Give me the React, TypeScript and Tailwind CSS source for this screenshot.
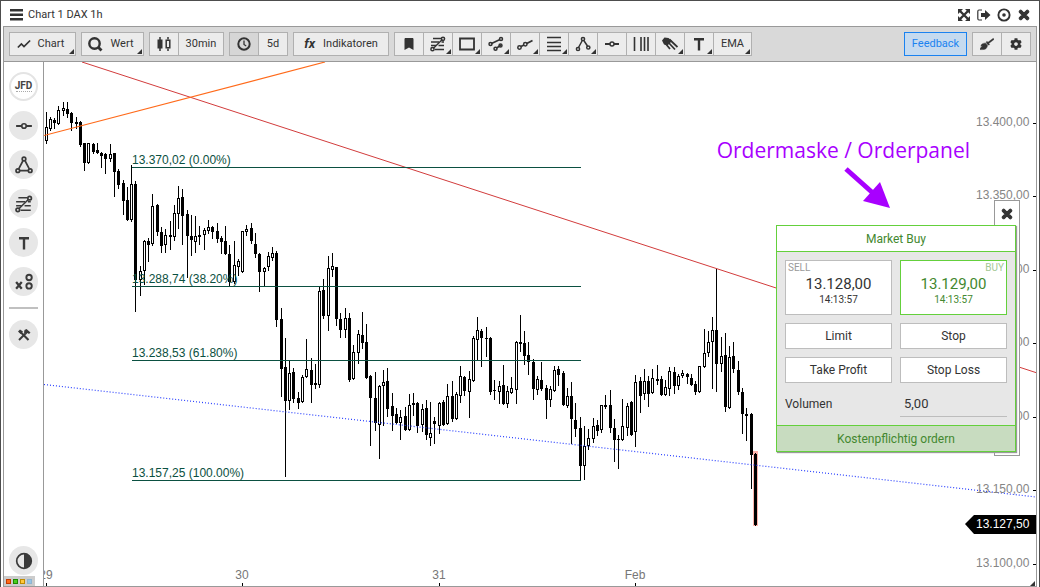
import type { ReactNode } from "react";
import { FaBookmark, FaBroom, FaCog, FaTimes } from "react-icons/fa";

// x, high, body top, body bottom, low, 1 = rising (hollow)
const CANDLES = [
  [46, 112, 127, 141, 143, 1], [50, 117, 119, 129, 130, 1], [54, 118, 120, 123, 128, 0],
  [58, 106, 110, 124, 124, 1], [63, 102, 108, 111, 115, 1], [67, 102, 109, 114, 117, 0],
  [71, 112, 113, 123, 130, 0], [76, 117, 122, 124, 128, 0], [80, 121, 122, 145, 146, 0],
  [84, 143, 143, 163, 170, 0], [88, 143, 143, 163, 163, 1], [93, 143, 144, 152, 153, 0],
  [97, 143, 150, 153, 153, 0], [101, 152, 153, 156, 167, 0], [105, 153, 154, 159, 173, 0],
  [110, 144, 154, 159, 161, 1], [114, 153, 153, 172, 196, 0], [118, 169, 171, 185, 188, 0],
  [123, 180, 183, 201, 214, 0], [127, 187, 200, 220, 220, 0], [131, 165, 184, 220, 221, 1],
  [135, 181, 184, 280, 311, 0], [140, 266, 271, 280, 295, 1], [144, 240, 241, 271, 284, 1],
  [148, 238, 241, 245, 261, 0], [152, 194, 206, 244, 245, 1], [157, 204, 205, 232, 235, 0],
  [161, 227, 232, 246, 252, 0], [165, 229, 235, 245, 252, 1], [170, 221, 235, 237, 249, 0],
  [174, 205, 213, 237, 240, 1], [178, 186, 198, 214, 228, 1], [182, 189, 197, 216, 244, 0],
  [187, 210, 214, 236, 277, 0], [191, 215, 236, 240, 255, 0], [195, 216, 236, 242, 252, 1],
  [199, 226, 235, 237, 244, 0], [204, 228, 230, 235, 249, 1], [208, 220, 227, 231, 233, 1],
  [212, 226, 227, 232, 238, 0], [217, 223, 231, 239, 242, 0], [221, 236, 238, 242, 253, 0],
  [225, 226, 241, 254, 254, 0], [229, 245, 254, 282, 285, 0], [234, 241, 265, 282, 283, 1],
  [238, 259, 261, 267, 275, 1], [242, 231, 231, 272, 272, 1], [246, 225, 229, 232, 235, 1],
  [251, 223, 228, 241, 243, 0], [255, 233, 244, 254, 257, 0], [259, 253, 254, 272, 291, 0],
  [264, 267, 268, 272, 286, 1], [268, 252, 256, 267, 270, 1], [272, 247, 253, 258, 260, 1],
  [276, 251, 253, 320, 326, 0], [281, 308, 319, 369, 396, 0], [285, 338, 367, 401, 476, 0],
  [289, 361, 373, 401, 409, 1], [293, 368, 372, 399, 402, 0], [298, 392, 398, 403, 408, 0],
  [302, 375, 377, 402, 402, 1], [306, 339, 369, 377, 377, 1], [311, 358, 370, 385, 402, 0],
  [315, 364, 383, 385, 388, 0], [319, 287, 291, 385, 387, 1], [323, 279, 290, 316, 318, 0],
  [328, 256, 268, 316, 330, 1], [332, 253, 266, 270, 276, 1], [336, 267, 267, 319, 325, 0],
  [340, 313, 319, 330, 337, 0], [345, 308, 318, 330, 337, 1], [349, 313, 318, 380, 381, 0],
  [353, 345, 352, 379, 379, 1], [358, 330, 334, 353, 363, 1], [362, 312, 335, 343, 348, 0],
  [366, 324, 342, 378, 378, 0], [370, 375, 376, 398, 445, 0], [375, 372, 398, 423, 430, 0],
  [379, 385, 386, 425, 458, 1], [383, 370, 382, 386, 425, 1], [387, 368, 381, 409, 416, 0],
  [392, 393, 406, 416, 430, 0], [396, 408, 414, 423, 423, 0], [400, 410, 417, 423, 439, 1],
  [405, 407, 416, 430, 430, 0], [409, 394, 405, 430, 430, 1], [413, 393, 403, 405, 415, 0],
  [417, 402, 403, 426, 432, 0], [422, 404, 409, 425, 431, 1], [426, 400, 408, 435, 439, 0],
  [430, 402, 433, 438, 445, 1], [434, 417, 421, 424, 443, 0], [439, 402, 403, 426, 433, 1],
  [443, 400, 402, 425, 425, 0], [447, 384, 396, 424, 424, 1], [452, 381, 396, 419, 421, 0],
  [456, 392, 394, 419, 419, 1], [460, 366, 376, 396, 402, 1], [464, 376, 377, 391, 395, 0],
  [469, 371, 379, 392, 417, 1], [473, 336, 338, 381, 381, 1], [477, 317, 330, 340, 360, 1],
  [481, 329, 331, 338, 366, 0], [486, 327, 338, 339, 356, 0], [490, 337, 338, 392, 394, 0],
  [494, 380, 390, 391, 399, 0], [499, 381, 386, 392, 403, 1], [503, 365, 385, 404, 404, 0],
  [507, 386, 391, 404, 407, 1], [511, 377, 388, 393, 393, 1], [516, 341, 342, 390, 403, 1],
  [520, 315, 342, 344, 351, 0], [524, 331, 343, 356, 364, 0], [528, 342, 355, 362, 374, 0],
  [533, 359, 362, 389, 399, 0], [537, 376, 379, 390, 394, 1], [541, 362, 380, 389, 390, 0],
  [546, 385, 388, 400, 418, 0], [550, 386, 389, 400, 406, 1], [554, 366, 370, 391, 391, 1],
  [558, 366, 369, 375, 385, 0], [563, 371, 373, 405, 405, 0], [567, 388, 396, 406, 407, 1],
  [571, 382, 396, 419, 443, 0], [575, 403, 420, 429, 436, 0], [580, 417, 428, 466, 480, 0],
  [584, 426, 446, 466, 479, 1], [588, 429, 438, 446, 449, 1], [593, 418, 426, 439, 442, 1],
  [597, 420, 425, 431, 435, 0], [601, 405, 405, 430, 432, 1], [605, 395, 405, 407, 408, 0],
  [610, 390, 405, 428, 432, 0], [614, 419, 428, 440, 461, 0], [618, 435, 439, 440, 468, 0],
  [622, 399, 426, 440, 440, 1], [627, 403, 406, 428, 435, 1], [631, 401, 402, 435, 435, 0],
  [635, 375, 382, 432, 446, 1], [640, 377, 381, 396, 412, 0], [644, 369, 381, 394, 399, 1],
  [648, 376, 381, 394, 406, 0], [652, 369, 378, 393, 393, 1], [657, 365, 379, 381, 384, 0],
  [661, 376, 379, 395, 395, 0], [665, 380, 387, 395, 395, 1], [669, 367, 371, 389, 395, 1],
  [674, 367, 372, 386, 393, 0], [678, 374, 376, 386, 389, 1], [682, 370, 373, 376, 377, 1],
  [687, 373, 374, 377, 383, 0], [691, 374, 378, 385, 385, 0], [695, 381, 384, 392, 394, 0],
  [699, 366, 366, 392, 392, 1], [704, 329, 353, 367, 367, 1], [708, 331, 342, 353, 356, 1],
  [712, 317, 330, 342, 388, 1], [716, 269, 330, 364, 391, 0], [721, 337, 356, 364, 371, 1],
  [725, 333, 355, 407, 411, 0], [729, 346, 357, 408, 408, 1], [733, 342, 356, 369, 372, 0],
  [738, 361, 370, 392, 394, 0], [742, 388, 392, 414, 433, 0], [746, 408, 414, 416, 440, 0],
  [751, 413, 414, 455, 488, 0], [755, 453, 454, 525, 525, 0],
];

const FIBS: [number, string][] = [
  [167, "13.370,02 (0.00%)"],
  [286, "13.288,74 (38.20%)"],
  [360, "13.238,53 (61.80%)"],
  [480, "13.157,25 (100.00%)"],
];

const PRICES: [number, string][] = [
  [123, "13.400,00"],
  [196, "13.350,00"],
  [270, "13.300,00"],
  [343, "13.250,00"],
  [417, "13.200,00"],
  [490, "13.150,00"],
  [564, "13.100,00"],
];

const TIMES: [number, string][] = [
  [46, "29"],
  [242, "30"],
  [439, "31"],
  [635, "Feb"],
];

function Icon({ size = 16, children }: { size?: number; children: ReactNode }) {
  return (
    <svg
      width={size}
      height={size}
      viewBox="0 0 16 16"
      fill="none"
      stroke="currentColor"
      strokeWidth="1.5"
      className="shrink-0"
      aria-hidden="true"
    >
      {children}
    </svg>
  );
}

const fibIcon = (
  <>
    <path d="M3 2.500h8M1 6h8M11.500 6H14M1 9.500h5M8.500 9.500H14M5 13.500h9" strokeWidth="1.400" />
    <path d="M3.200 12.400L12.300 3.600" strokeWidth="1.400" />
    <circle cx="13" cy="2.800" r="1.600" />
    <circle cx="2.500" cy="13.200" r="1.600" />
  </>
);

const hlineIcon = (
  <>
    <path d="M1 8h5M10 8h5" strokeWidth="1.800" />
    <circle cx="8" cy="8" r="2" strokeWidth="1.500" />
  </>
);

const textIcon = <path d="M3 3.200h10M8 3v11.500" strokeWidth="2.400" />;

const TOOLS: { name: string; menu?: boolean; icon: ReactNode }[] = [
  { name: "Lesezeichen", icon: <FaBookmark size={12} /> },
  { name: "Fibonacci", menu: true, icon: <Icon>{fibIcon}</Icon> },
  {
    name: "Rechteck",
    menu: true,
    icon: <Icon><path d="M1 2.500h14v11H1z" strokeWidth="1.800" /></Icon>,
  },
  {
    name: "Kanal",
    menu: true,
    icon: (
      <Icon>
        <path d="M3.500 7.500L12 3.500M8.500 12L13.500 9" />
        <circle cx="2.500" cy="8" r="1.500" />
        <circle cx="13" cy="3" r="1.500" />
        <circle cx="7.500" cy="12.800" r="1.500" />
        <circle cx="12.500" cy="9.500" r="1.500" />
      </Icon>
    ),
  },
  {
    name: "Trendlinie",
    menu: true,
    icon: (
      <Icon>
        <path d="M4 10.500L7 9M9.800 7.500L15.500 4.500" strokeWidth="1.800" />
        <circle cx="2.500" cy="11.500" r="1.700" />
        <circle cx="8.300" cy="8.200" r="1.700" />
      </Icon>
    ),
  },
  {
    name: "Linien",
    menu: true,
    icon: <Icon><path d="M1 1.500h14M1 6.500h14M1 10.500h14M1 14.500h14" strokeWidth="1.600" /></Icon>,
  },
  {
    name: "Muster",
    menu: true,
    icon: (
      <Icon>
        <path d="M3.500 11.500L7.300 4.500M8.800 4.500L12.500 10" />
        <circle cx="8" cy="3" r="1.600" />
        <circle cx="3" cy="13" r="1.600" />
        <circle cx="13.300" cy="11.500" r="1.600" />
      </Icon>
    ),
  },
  { name: "Horizontale", icon: <Icon>{hlineIcon}</Icon> },
  {
    name: "Vertikale",
    icon: <Icon><path d="M1.500 1v14M8 1v14M11.500 1v14M15 1v14" strokeWidth="1.600" /></Icon>,
  },
  {
    name: "Pitchfork",
    menu: true,
    icon: (
      <Icon>
        <path d="M0 4.500L2.500 1.500l4 .500 3.500 3-4.500 4.500L2 8.500z" fill="currentColor" stroke="none" />
        <path d="M7.500 3.500L15.500 11M6 6l7 7.500M3.500 7.500L8 13" strokeWidth="1.800" />
      </Icon>
    ),
  },
  { name: "Text", menu: true, icon: <Icon>{textIcon}</Icon> },
];

const SIDE_TOOLS: { name: string; icon: ReactNode }[] = [
  { name: "Horizontale Linie", icon: <Icon size={18}>{hlineIcon}</Icon> },
  {
    name: "Dreieck",
    icon: (
      <Icon size={18}>
        <path d="M3.300 11.500L7.200 4M8.800 4L12.700 11.500M4 13h8" />
        <circle cx="8" cy="2.600" r="1.600" />
        <circle cx="2.500" cy="13" r="1.600" />
        <circle cx="13.500" cy="13" r="1.600" />
      </Icon>
    ),
  },
  { name: "Fibonacci Retracement", icon: <Icon size={18}>{fibIcon}</Icon> },
  { name: "Textfeld", icon: <Icon>{textIcon}</Icon> },
  {
    name: "Symbole",
    icon: (
      <Icon size={18}>
        <path d="M1 8l5 6M6 8l-5 6" strokeWidth="2" />
        <circle cx="12.500" cy="4" r="2.400" strokeWidth="1.700" />
        <circle cx="12.500" cy="11.500" r="2.400" strokeWidth="1.700" />
      </Icon>
    ),
  },
];

const btn = "relative flex h-full items-center justify-center text-[#333]";
const group = "flex h-6 shrink-0 divide-x divide-[#b0b0b0] border border-[#b0b0b0] bg-[#ececec]";
const round =
  "flex size-[29px] shrink-0 items-center justify-center rounded-full bg-[#e7e7e7] text-[#3a3a3a]";

function Corner() {
  return (
    <span className="absolute right-px bottom-px size-[5px] bg-[#333] [clip-path:polygon(100%_0,100%_100%,0_100%)]" />
  );
}

function TitleBar() {
  return (
    <header className="flex h-[25px] items-center justify-between pt-[3px] pr-[5px] pl-[7px] text-[#333]">
      <div className="flex items-center gap-[5px]">
        <button aria-label="Menü">
          <svg width="13" height="12" viewBox="0 0 13 12" fill="currentColor">
            <path d="M0 0h13v2.500H0zM0 4.500h13v2.500H0zM0 9h13v2.500H0z" />
          </svg>
        </button>
        <h1 className="text-[11px]">Chart 1 DAX 1h</h1>
      </div>
      <div className="flex items-center gap-1">
        <button aria-label="Maximieren">
          <Icon>
            <path d="M4 4l8 8M12 4l-8 8" strokeWidth="2.400" />
            <path d="M2 2h5L2 7zM14 2v5L9 2zM2 14V9l5 5zM14 14H9l5-5z" fill="currentColor" stroke="none" />
          </Icon>
        </button>
        <button aria-label="Auslagern">
          <Icon>
            <path d="M6 3H3Q1.800 3 1.800 4.500v7Q1.800 13 3 13h3" strokeWidth="1.200" />
            <path d="M5 6h4V3l5.500 5L9 13v-3H5z" fill="currentColor" stroke="none" />
          </Icon>
        </button>
        <button aria-label="Fokus">
          <Icon>
            <circle cx="8" cy="8" r="5.600" strokeWidth="1.900" />
            <circle cx="8" cy="8" r="1.800" fill="currentColor" stroke="none" />
          </Icon>
        </button>
        <button aria-label="Schließen" className="flex w-4 justify-center">
          <FaTimes size={14} stroke="currentColor" strokeWidth={40} />
        </button>
      </div>
    </header>
  );
}

function Toolbar() {
  return (
    <div className="flex h-[35px] items-center gap-[5px] border-b border-[#999] bg-[#d9d9d9] px-[5px] text-[11px]">
      <div className={group}>
        <button className={`${btn} w-[65px] gap-[7px] pr-1`}>
          <Icon size={14}>
            <path d="M1 12l4-4 3 3 7-7" strokeWidth="2" />
          </Icon>
          Chart
          <Corner />
        </button>
      </div>
      <div className={group}>
        <button className={`${btn} w-[61px] gap-[7px] pr-1`}>
          <Icon>
            <circle cx="7.500" cy="7.500" r="5.200" strokeWidth="2.400" />
            <path d="M11 11l3.500 3.500" strokeWidth="2.800" />
          </Icon>
          Wert
          <Corner />
        </button>
      </div>
      <div className={group}>
        <button className={`${btn} w-[29px]`} aria-label="Kerzen">
          <Icon>
            <path d="M4 1v14M12 1v2.500M12 12.500V15" />
            <path d="M1.500 3.500h5v9h-5z" fill="currentColor" stroke="none" />
            <path d="M10.200 4.200h3.600v7.600h-3.600z" />
          </Icon>
        </button>
        <button className={`${btn} w-11`}>30min</button>
      </div>
      <div className={group}>
        <button className={`${btn} w-[29px] bg-[#d6d6d6]`} aria-label="Zeitraum">
          <Icon>
            <circle cx="8" cy="8" r="5.700" strokeWidth="2" />
            <path d="M8 4.500v4l2.200 1.500" strokeWidth="1.300" />
          </Icon>
        </button>
        <button className={`${btn} w-7`}>5d</button>
      </div>
      <div className={group}>
        <button className={`${btn} w-[94px] gap-2`}>
          <span className="text-[13px] font-bold italic">fx</span>
          Indikatoren
        </button>
      </div>
      <div className={group}>
        {TOOLS.map((t) => (
          <button key={t.name} aria-label={t.name} className={`${btn} w-[29px]`}>
            {t.icon}
            {t.menu && <Corner />}
          </button>
        ))}
        <button className={`${btn} w-[37px]`}>
          EMA
          <Corner />
        </button>
      </div>
      <button className="ml-auto h-6 w-[63px] shrink-0 border border-[#1a82f0] bg-[#c5daef] text-[#1a82f0]">
        Feedback
      </button>
      <div className={group}>
        <button className={`${btn} w-[29px]`} aria-label="Aufräumen">
          <FaBroom size={14} stroke="currentColor" strokeWidth={20} />
        </button>
        <button className={`${btn} w-7`} aria-label="Einstellungen">
          <FaCog size={12} />
        </button>
      </div>
    </div>
  );
}

function Sidebar() {
  return (
    <nav className="flex w-10 shrink-0 flex-col items-center border-r border-[#999] bg-white">
      <div className="flex flex-col items-center gap-[10px] pt-[10px]">
        <button className="flex size-[29px] flex-col items-center justify-center rounded-full border-2 border-[#e4e4e4] text-[10px] leading-[9px] font-bold text-[#444]">
          JFD
          <span className="mt-px w-4 border-t border-dotted border-[#aaa]" />
        </button>
        {SIDE_TOOLS.map((t) => (
          <button key={t.name} aria-label={t.name} className={round}>
            {t.icon}
          </button>
        ))}
        <hr className="my-px w-[29px] border-t-2 border-[#c0c0c0]" />
        <button aria-label="Werkzeuge" className={round}>
          <Icon>
            <path d="M4.500 5L12.500 13" strokeWidth="2.200" />
            <path d="M3 13L9.500 6.500" strokeWidth="2" />
            <path d="M2 4.500L4 2.500l3 2-2.500 2.500zM8.500 3l2-1 4 3.500-1.500 1.500-1.500-1-1.500 1.500-2-2z" fill="currentColor" stroke="none" />
          </Icon>
        </button>
      </div>
      <button aria-label="Kontrast" className={`${round} mt-auto`}>
        <Icon size={18}>
          <circle cx="8" cy="8" r="6.500" strokeWidth="1.500" />
          <path d="M8 1.500a6.500 6.500 0 010 13z" fill="currentColor" stroke="none" />
        </Icon>
      </button>
      <div className="mt-px flex h-[10px] w-[31px] items-center gap-[2px] self-start bg-[#ccc] pl-[2px]">
        <span className="size-[5px] border border-[#c43a00] bg-[#ff6a1a]" />
        <span className="size-[5px] border border-[#1c8a00] bg-[#46cf1e]" />
        <span className="size-[5px] border border-[#c08a00] bg-[#ffc83c]" />
        <span className="size-[5px] border border-[#8fb4d0] bg-[#96c4e6]" />
      </div>
    </nav>
  );
}

function PriceChart() {
  return (
    <svg
      viewBox="44 62 992 524"
      preserveAspectRatio="xMaxYMin meet"
      className="block size-full font-['Liberation_Sans',sans-serif] text-[12px]"
      role="img"
      aria-label="DAX 1h"
    >
      <g shapeRendering="crispEdges">
        <rect x="753" y="451" width="5" height="75" fill="#ffb3ab" />
        {CANDLES.map(([x, high, top, bottom, low, up]) => (
          <g key={x}>
            <rect x={x} y={high} width="1" height={low - high + 1} />
            <rect x={x - 1} y={top} width="3" height={Math.max(bottom - top, 1)} />
            {up === 1 && (
              <rect x={x} y={top + 1} width="1" height={Math.max(bottom - top - 2, 1)} fill="#fff" />
            )}
          </g>
        ))}
      </g>

      <path d="M82 62L1036 372.600" stroke="#d23c3c" />
      <path d="M44 135.500L325 62" stroke="#ff6a1a" strokeWidth="1.200" />
      <path d="M44 384.500L1036 497" stroke="#2a40ff" strokeWidth="1.200" strokeDasharray="1 2" />

      {FIBS.map(([y, label]) => (
        <g key={label} fill="#0b5041">
          <rect x="132" y={y} width="449" height="1" />
          <text x="132" y={y - 3}>{label}</text>
        </g>
      ))}

      {PRICES.map(([y, label]) => (
        <g key={label}>
          <text x="976" y={y + 3} fill="#858585">{label}</text>
          <rect x="1033" y={y} width="3" height="1" />
        </g>
      ))}
      {TIMES.map(([x, label]) => (
        <g key={label}>
          <text x={x} y="579" textAnchor="middle" fill="#777">{label}</text>
          <rect x={x} y="583" width="1" height="3" />
        </g>
      ))}

      <path d="M965 524l9-9h62v19h-62z" />
      <text x="976" y="528" fill="#fff">13.127,50</text>
      <path d="M1035 581v5h-5z" fill="#333" />

      <path d="M846 169L874 194" stroke="#a800ff" strokeWidth="5" />
      <path d="M890 208l-27-7 17-19z" fill="#a800ff" />
    </svg>
  );
}

function OrderPanel() {
  const box = "border border-[#bdbdbd] bg-white";
  return (
    <div className="absolute top-[138px] right-4 h-64 w-[26px] border border-[#999] bg-white">
      <button aria-label="Orderpanel schließen" className="flex h-[25px] w-full items-center justify-center text-[#333]">
        <FaTimes size={14} stroke="currentColor" strokeWidth={40} />
      </button>
      <form className="absolute top-6 right-[3px] w-[240px] border border-[#64d03c] bg-[#e7e7e7] text-[12px] text-[#333] shadow-[1px_1px_1px_#999]">
        <h2 className="flex h-[26px] items-center justify-center border-b border-[#64d03c] bg-white text-[#43882f]">
          Market Buy
        </h2>
        <div className="grid grid-cols-2 gap-2 p-2">
          <button type="button" className={`${box} relative h-[55px] pt-1`}>
            <span className="absolute top-px left-[2px] text-[10px] leading-3 text-[#999]">SELL</span>
            <span className="block text-[15px] leading-5">13.128,00</span>
            <span className="block text-[10px] leading-3">14:13:57</span>
          </button>
          <button type="button" className="relative h-[55px] border border-[#64d03c] bg-white pt-1 text-[#43882f]">
            <span className="absolute top-px right-[2px] text-[10px] leading-3 text-[#a3c795]">BUY</span>
            <span className="block text-[15px] leading-5">13.129,00</span>
            <span className="block text-[10px] leading-3">14:13:57</span>
          </button>
          <button type="button" className={`${box} h-[26px]`}>Limit</button>
          <button type="button" className={`${box} h-[26px]`}>Stop</button>
          <button type="button" className={`${box} h-[26px]`}>Take Profit</button>
          <button type="button" className={`${box} h-[26px]`}>Stop Loss</button>
          <label htmlFor="volume" className="flex h-[26px] items-center">Volumen</label>
          <input
            id="volume"
            defaultValue="5,00"
            className="h-[26px] w-full min-w-0 border-b border-[#bdbdbd] bg-transparent px-1 text-[13px] outline-none"
          />
        </div>
        <button
          type="button"
          className="h-[26px] w-full border-t border-[#64d03c] bg-[#c8dcc0] text-[#43882f]"
        >
          Kostenpflichtig ordern
        </button>
      </form>
    </div>
  );
}

export default function App() {
  return (
    <div className="flex h-screen flex-col border-x border-t border-[#4d4d4d] bg-white px-[2px] font-[Roboto,sans-serif]">
      <TitleBar />
      <main className="flex min-h-0 flex-1 flex-col border border-[#999]">
        <Toolbar />
        <div className="flex min-h-0 flex-1">
          <Sidebar />
          <section className="relative min-w-0 flex-1">
            <PriceChart />
            <p className="absolute top-[74px] right-[66px] font-['Open_Sans',sans-serif] text-[21px] leading-7 text-[#a800ff]">
              Ordermaske / Orderpanel
            </p>
            <OrderPanel />
          </section>
        </div>
      </main>
    </div>
  );
}
